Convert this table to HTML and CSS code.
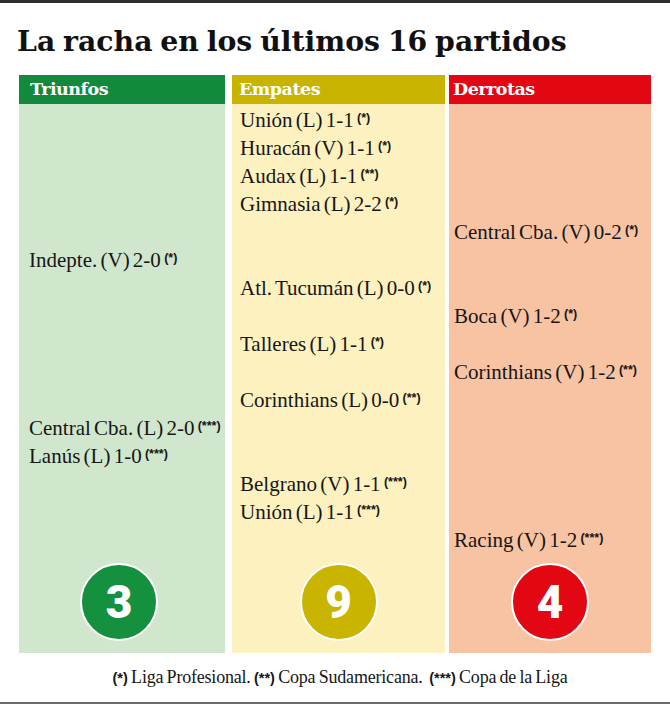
FILE: index.html
```html
<!DOCTYPE html>
<html lang="es">
<head>
<meta charset="utf-8">
<title>La racha en los últimos 16 partidos</title>
<link rel="stylesheet" href="styles.css">
</head>
<body>
<main class="page">
  <h1 class="title">La racha en los últimos 16 partidos</h1>
  <div class="board">
    <section class="col win">
      <h2 class="col-head">Triunfos</h2>
      <div class="col-body">
        <ol class="slots">
          <li></li><li></li><li></li><li></li><li></li>
          <li>Indepte. (V) 2-0 <sup class="mark">(*)</sup></li>
          <li></li><li></li><li></li><li></li><li></li>
          <li>Central Cba. (L) 2-0 <sup class="mark">(***)</sup></li>
          <li>Lanús (L) 1-0 <sup class="mark">(***)</sup></li>
          <li></li><li></li><li></li>
        </ol>
        <div class="count"><span>3</span></div>
      </div>
    </section>
    <section class="col draw">
      <h2 class="col-head">Empates</h2>
      <div class="col-body">
        <ol class="slots">
          <li>Unión (L) 1-1 <sup class="mark">(*)</sup></li>
          <li>Huracán (V) 1-1 <sup class="mark">(*)</sup></li>
          <li>Audax (L) 1-1 <sup class="mark">(**)</sup></li>
          <li>Gimnasia (L) 2-2 <sup class="mark">(*)</sup></li>
          <li></li><li></li>
          <li>Atl. Tucumán (L) 0-0 <sup class="mark">(*)</sup></li>
          <li></li>
          <li>Talleres (L) 1-1 <sup class="mark">(*)</sup></li>
          <li></li>
          <li>Corinthians (L) 0-0 <sup class="mark">(**)</sup></li>
          <li></li><li></li>
          <li>Belgrano (V) 1-1 <sup class="mark">(***)</sup></li>
          <li>Unión (L) 1-1 <sup class="mark">(***)</sup></li>
          <li></li>
        </ol>
        <div class="count"><span>9</span></div>
      </div>
    </section>
    <section class="col loss">
      <h2 class="col-head">Derrotas</h2>
      <div class="col-body">
        <ol class="slots">
          <li></li><li></li><li></li><li></li>
          <li>Central Cba. (V) 0-2 <sup class="mark">(*)</sup></li>
          <li></li><li></li>
          <li>Boca (V) 1-2 <sup class="mark">(*)</sup></li>
          <li></li>
          <li>Corinthians (V) 1-2 <sup class="mark">(**)</sup></li>
          <li></li><li></li><li></li><li></li><li></li>
          <li>Racing (V) 1-2 <sup class="mark">(***)</sup></li>
        </ol>
        <div class="count"><span>4</span></div>
      </div>
    </section>
  </div>
  <p class="notes"><b>(*)</b> Liga Profesional. <b>(**)</b> Copa Sudamericana. &nbsp;<b>(***)</b> Copa de la Liga</p>
</main>
</body>
</html>
```

FILE: styles.css
```css
* { box-sizing: border-box; }

html, body {
  margin: 0;
  padding: 0;
  background: #ffffff;
}

.page {
  width: 670px;
  height: 705px;
  border-top: 3px solid #2e2e2e;
  color: #161616;
  font-family: "Liberation Serif", "DejaVu Serif", serif;
}

.page::after {
  content: "";
  display: block;
  height: 2px;
  background: #6b6b6b;
  margin-top: 14px;
}

.title {
  margin: 21px 0 0 17px;
  font-family: "DejaVu Serif", serif;
  font-weight: 700;
  font-size: 28.3px;
  line-height: 34px;
  letter-spacing: 0;
  word-spacing: -2px;
  color: #111;
}

.board {
  display: flex;
  margin: 17px 0 0 19px;
}

.col { display: flex; flex-direction: column; }
.win  { width: 206px; }
.draw { width: 213px; margin-left: 7px; }
.loss { width: 202px; margin-left: 4px; }

.col-head {
  margin: 0;
  height: 29px;
  line-height: 29px;
  font-family: "DejaVu Serif", serif;
  font-weight: 700;
  font-size: 17.5px;
  letter-spacing: -0.5px;
  color: #ffffff;
}

.win .col-head  { background: #13893b; padding-left: 11px; }
.draw .col-head { background: #c8b400; padding-left: 7px; }
.loss .col-head { background: #e30613; padding-left: 4px; }

.col-body {
  padding: 2px 0 12px;
}
.win .col-body  { background: #d1e7cd; padding-left: 10px; }
.draw .col-body { background: #fdf1c0; padding-left: 8px; }
.loss .col-body { background: #f8c3a3; padding-left: 5px; }

.slots {
  list-style: none;
  margin: 0;
  padding: 0;
}

.slots li {
  height: 28px;
  line-height: 28px;
  font-size: 21px;
  letter-spacing: 0;
  word-spacing: -2px;
  white-space: nowrap;
}

.mark {
  font-family: "Liberation Sans", Arial, sans-serif;
  font-weight: 700;
  font-size: 12.5px;
  letter-spacing: 0;
  vertical-align: 5px;
  line-height: 0;
}

.count {
  display: flex;
  justify-content: center;
  margin-top: 9px;
}
.win .count  { margin-left: -16px; }
.draw .count { margin-left: -8px; }
.loss .count { margin-left: -5px; }

.count span {
  width: 78px;
  height: 78px;
  border-radius: 50%;
  border: 2px solid #ffffff;
  display: flex;
  align-items: center;
  justify-content: center;
  font-family: Roboto, "Liberation Sans", sans-serif;
  font-weight: 900;
  font-size: 46px;
  color: #ffffff;
}
.win .count span  { background: #15903f; }
.draw .count span { background: #c9b400; }
.loss .count span { background: #e30613; }

.notes {
  margin: 14px 0 0;
  text-align: center;
  padding-left: 10px;
  font-size: 18px;
  line-height: 20px;
  letter-spacing: -0.2px;
  word-spacing: -1px;
  color: #161616;
}
.notes b {
  font-family: "Liberation Sans", Arial, sans-serif;
  font-size: 14.5px;
  letter-spacing: 0;
}
```
